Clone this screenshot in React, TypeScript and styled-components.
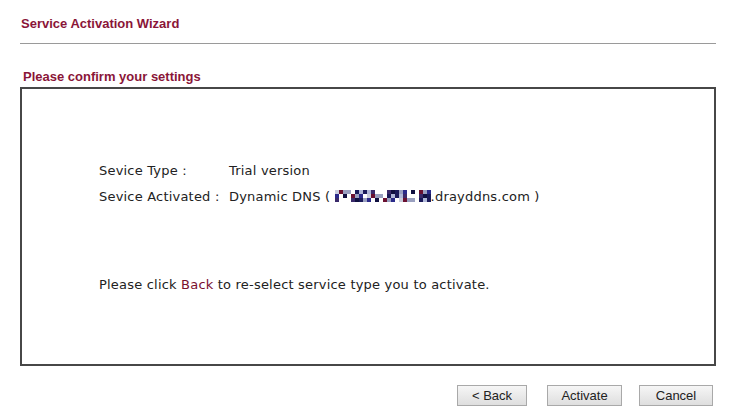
import React from "react";
import styled, { createGlobalStyle } from "styled-components";

const Global = createGlobalStyle`
  html, body { margin: 0; padding: 0; background: #fff; }
  body { width: 736px; height: 418px; overflow: hidden; }
`;

const Page = styled.div`
  padding: 0 20px 0 20px;
  display: flex;
  flex-direction: column;
`;

const Title = styled.div`
  font-family: "Liberation Sans", Arial, sans-serif;
  font-weight: bold;
  font-size: 13px;
  color: #8a1538;
  padding: 16px 0 0 1px;
  height: 43px;
  box-sizing: border-box;
  line-height: 15px;
`;

const Rule = styled.div`
  height: 1px;
  background: #9a9a9a;
`;

const Subtitle = styled.div`
  font-family: "Liberation Sans", Arial, sans-serif;
  font-weight: bold;
  font-size: 13px;
  color: #8a1538;
  margin-top: 25px;
  padding-left: 3px;
  line-height: 15px;
  height: 18px;
`;

const Panel = styled.div`
  border: 2px solid #474747;
  height: 279px;
  box-sizing: border-box;
  padding: 74px 0 0 77px;
  font-family: "DejaVu Sans", Verdana, sans-serif;
  font-size: 13px;
  color: #222;
  letter-spacing: 0.2px;
`;

const InfoGrid = styled.div`
  display: grid;
  grid-template-columns: 130px auto;
  row-gap: 10px;
  line-height: 16px;
`;

const Note = styled.div`
  margin-top: 72px;
  line-height: 16px;
`;

const Link = styled.span`
  color: #7a1030;
`;

const Footer = styled.div`
  display: flex;
  justify-content: flex-end;
  margin-top: 19px;
  padding-right: 3px;
`;

const Button = styled.button<{ $w: number; $ml: number }>`
  width: ${(p) => p.$w}px;
  margin-left: ${(p) => p.$ml}px;
  height: 21px;
  font-family: "Liberation Sans", Arial, sans-serif;
  font-size: 13px;
  color: #222;
  background: linear-gradient(#f6f6f6, #dedede);
  border: 1px solid #a9a9a9;
  border-radius: 0;
  padding: 0;
  line-height: 19px;
`;

const Blocks: React.FC = () => {
  const cells: [number, number, string][] = [];
  const colors = ["#1a1a5a", "#6a1030", "#2a2a8a", "#9aa0c0", "#c8ccdc", "#3a2a6a", "#101040", "#b0b8d8"];
  let seed = 7;
  for (let x = 0; x < 24; x++) {
    for (let y = 0; y < 3; y++) {
      seed = (seed * 37 + 11) % 101;
      if (seed % 3 !== 0) cells.push([x, y, colors[seed % colors.length]]);
    }
  }
  return (
    <svg width="96" height="12" viewBox="0 0 96 12" style={{ verticalAlign: "-1px" }}>
      {cells.map(([x, y, c], i) => (
        <rect key={i} x={x * 4} y={y * 4} width={4} height={4} fill={c} />
      ))}
    </svg>
  );
};

export default function App() {
  return (
    <>
      <Global />
      <Page>
        <Title>Service Activation Wizard</Title>
        <Rule />
        <Subtitle>Please confirm your settings</Subtitle>
        <Panel>
          <InfoGrid>
            <span>Sevice Type :</span>
            <span>Trial version</span>
            <span>Sevice Activated :</span>
            <span>
              Dynamic DNS ( <Blocks />.drayddns.com )
            </span>
          </InfoGrid>
          <Note>
            Please click <Link>Back</Link> to re-select service type you to activate.
          </Note>
        </Panel>
        <Footer>
          <Button $w={70} $ml={0}>&lt; Back</Button>
          <Button $w={75} $ml={20}>Activate</Button>
          <Button $w={74} $ml={17}>Cancel</Button>
        </Footer>
      </Page>
    </>
  );
}
